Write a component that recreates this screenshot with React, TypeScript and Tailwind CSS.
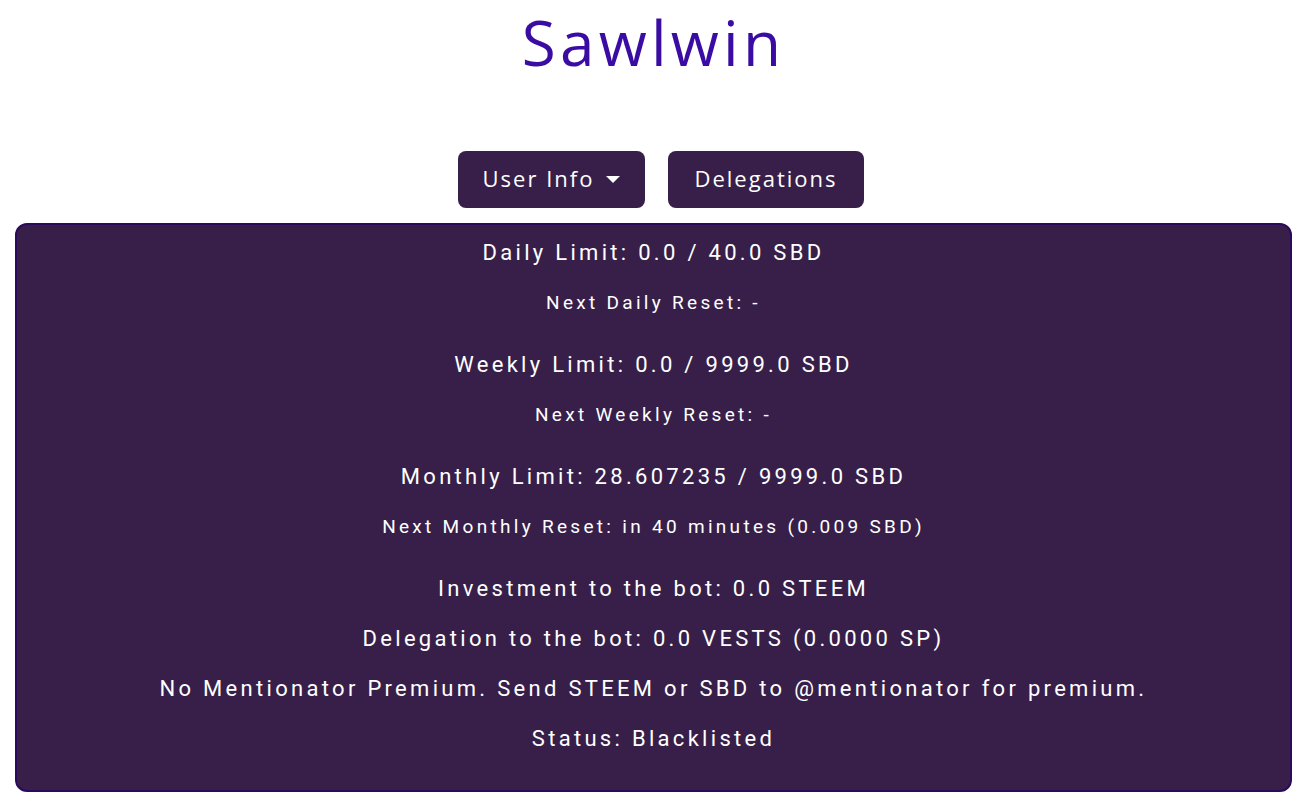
export default function App() {
  const big = "text-[22px] leading-[50px] tracking-[3.3px]"
  const small = "text-[19px] leading-[50px] tracking-[3.3px] mb-[12px]"
  return (
    <div className="min-h-[809px] bg-white pl-[15px] pr-[18px] pb-[16px] font-['Roboto',sans-serif]">
      <h1 className="pt-[2px] text-center text-[62px] leading-[80px] text-[#3a0ca3] font-['Open_Sans',sans-serif] tracking-[4.2px]">
        Sawlwin
      </h1>

      <div className="mt-[69px] ml-[15px] flex justify-center gap-[23px] font-['Open_Sans',sans-serif] tracking-[2px]">
        <button className="flex h-[57px] w-[187px] items-center justify-center gap-[12px] rounded-[8px] bg-[#371f4a] pb-[3px] text-[22px] text-white">
          User Info
          <svg width="14" height="7" viewBox="0 0 14 7" className="mt-[3px]">
            <path d="M0 0h14L7 7z" fill="white" />
          </svg>
        </button>
        <button className="flex h-[57px] w-[196px] items-center justify-center rounded-[8px] bg-[#371f4a] pb-[3px] text-[22px] text-white">
          Delegations
        </button>
      </div>

      <div className="mt-[15px] rounded-[12px] border-2 border-[#2a0a5c] bg-[#371f4a] pt-[3px] pb-[26px] text-center text-white">
        <p className={big}>Daily Limit: 0.0 / 40.0 SBD</p>
        <p className={small}>Next Daily Reset: -</p>
        <p className={big}>Weekly Limit: 0.0 / 9999.0 SBD</p>
        <p className={small}>Next Weekly Reset: -</p>
        <p className={big}>Monthly Limit: 28.607235 / 9999.0 SBD</p>
        <p className={small}>Next Monthly Reset: in 40 minutes (0.009 SBD)</p>
        <p className={big}>Investment to the bot: 0.0 STEEM</p>
        <p className={big}>Delegation to the bot: 0.0 VESTS (0.0000 SP)</p>
        <p className={big}>No Mentionator Premium. Send STEEM or SBD to @mentionator for premium.</p>
        <p className={big}>Status: Blacklisted</p>
      </div>
    </div>
  )
}
